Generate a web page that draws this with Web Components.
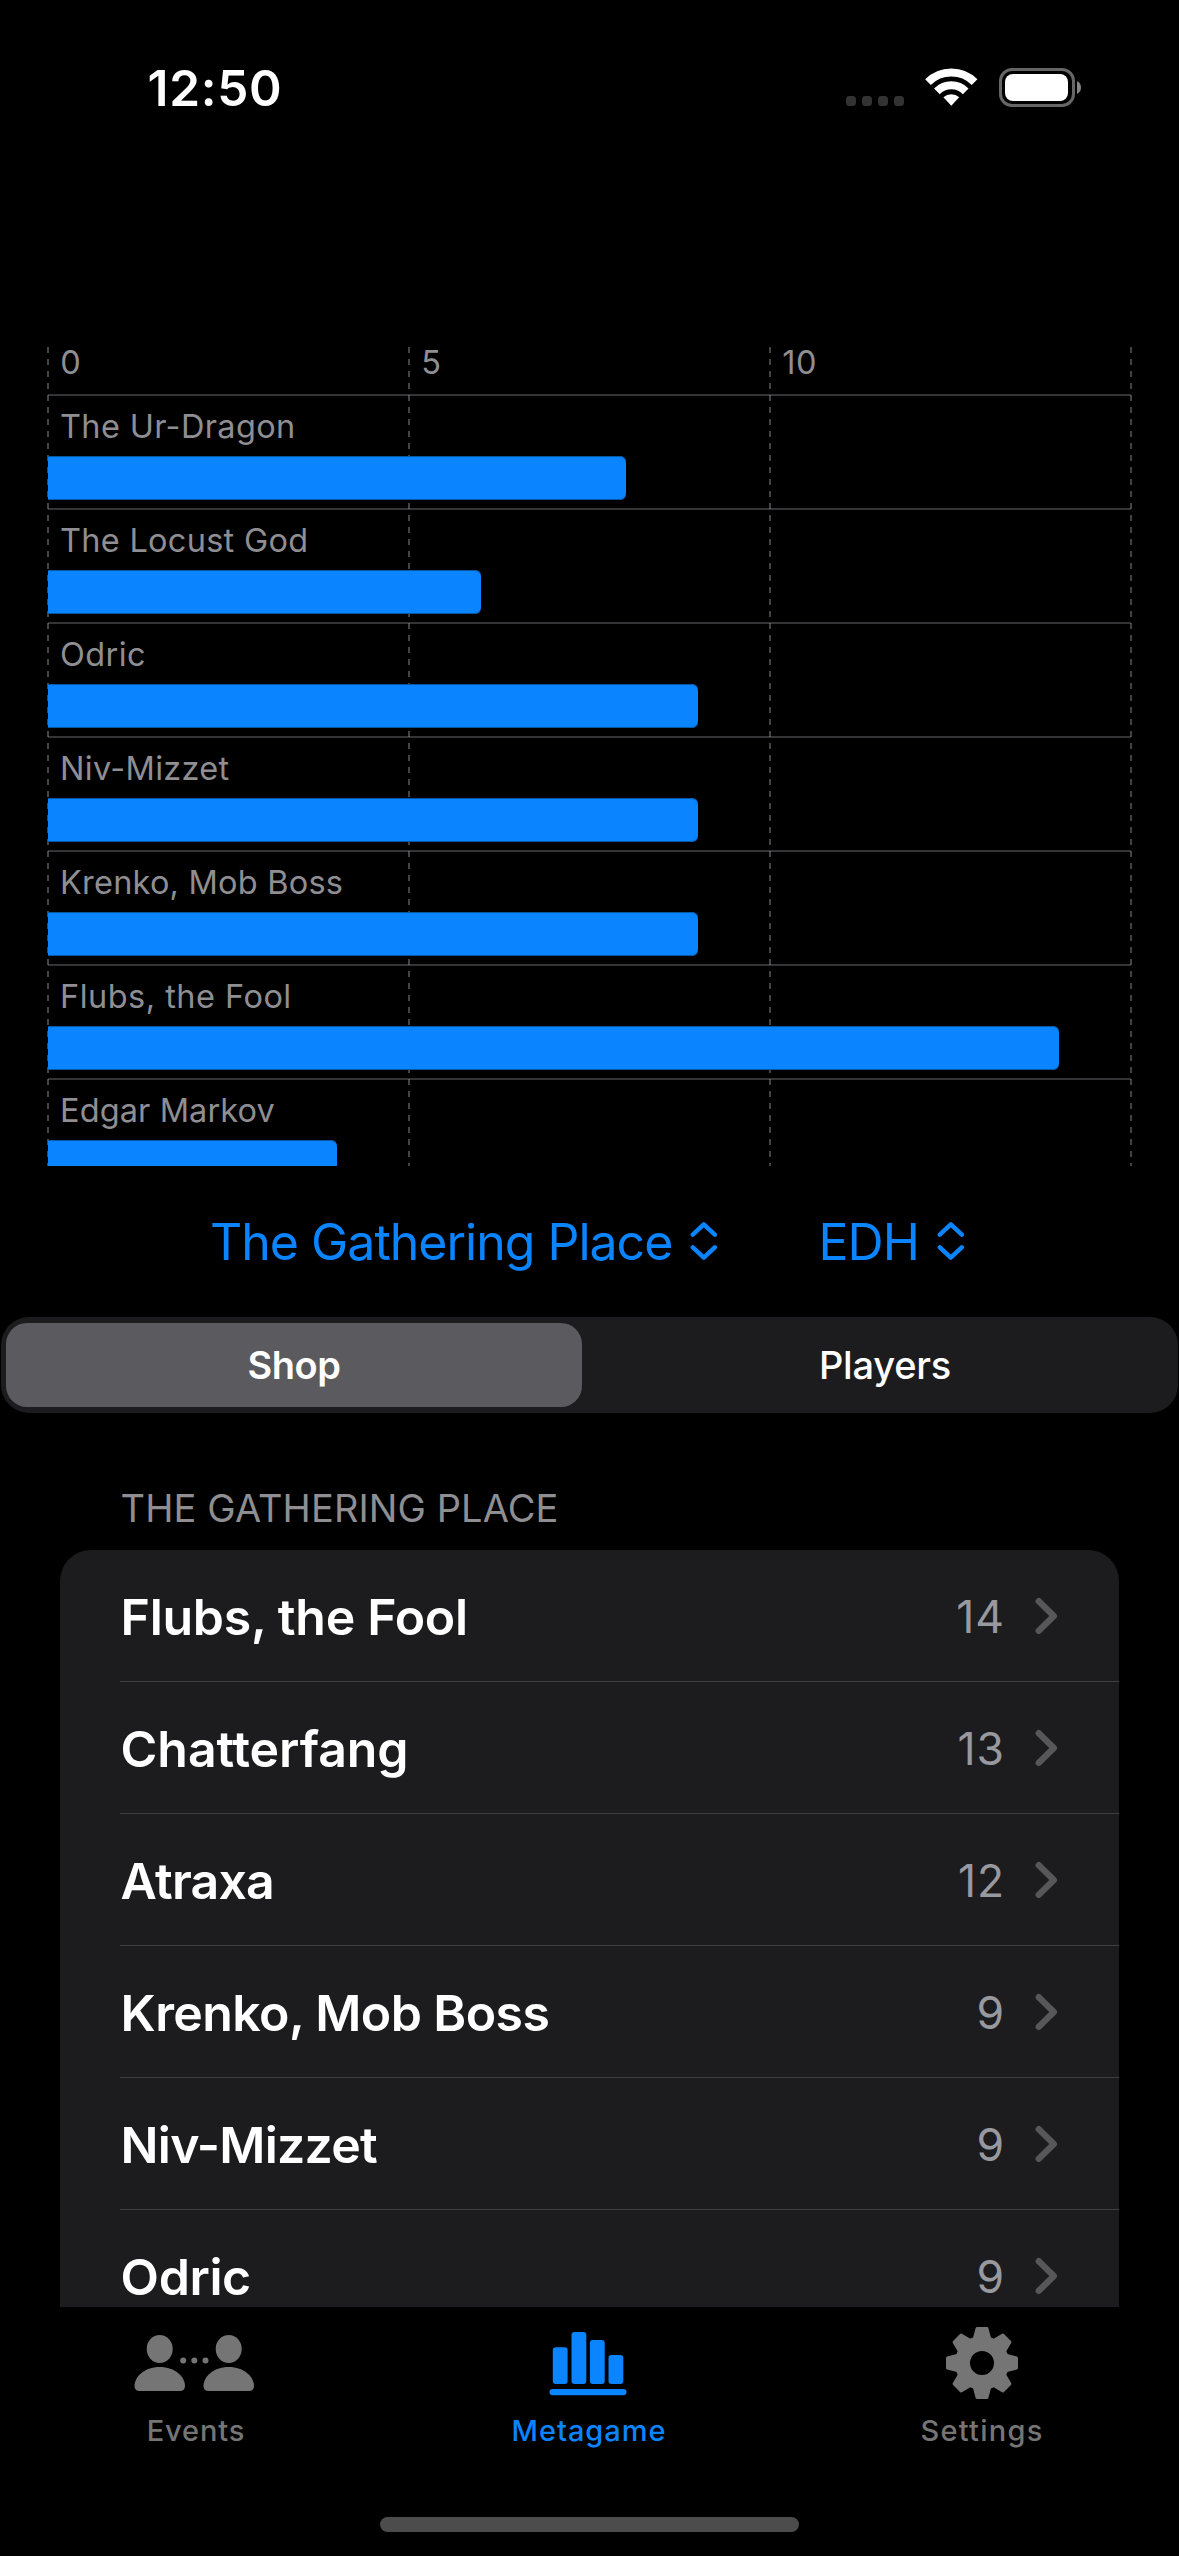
<!DOCTYPE html>
<html lang="en">
<head>
<meta charset="utf-8">
<title>Metagame</title>
<style>
html,body{margin:0;background:#000}
body{width:1179px;height:2556px;overflow:hidden;font-family:Inter,"Liberation Sans",sans-serif;color:#fff}
</style>
</head>
<body>
<meta-app></meta-app>
<script>
const define = (name, render) => customElements.define(name, class extends HTMLElement {
  connectedCallback() {
    if (this.shadowRoot) return;
    this.attachShadow({ mode: 'open' }).innerHTML = render(this);
  }
});
const attr = (el, name) => el.getAttribute(name) || '';

define('status-bar', () => `
<style>
:host{display:flex;align-items:center;justify-content:space-between;height:60px;padding:58px 95px 0 147.5px}
time{font-size:49.5px;font-weight:600;line-height:60px;letter-spacing:.7px}
svg{display:block}
</style>
<time>12:50</time>
<svg width="240" height="44" viewBox="844 66 240 44">
  <g fill="#333"><rect x="846" y="96" width="10" height="10" rx="3.6"/><rect x="862" y="96" width="10" height="10" rx="3.6"/><rect x="878" y="96" width="10" height="10" rx="3.6"/><rect x="894" y="96" width="10" height="10" rx="3.6"/></g>
  <g fill="none" stroke="#fff" stroke-width="8"><path d="M928 82.2A33 33 0 0 1 974.6 82.2"/><path d="M936.9 91.3A20.4 20.4 0 0 1 965.7 91.3"/></g>
  <path d="M951.3 105.7L943.4 97.2A11.8 11.8 0 0 1 959.2 97.2Z" fill="#fff"/>
  <rect x="1000.5" y="69.5" width="73" height="36" rx="11.5" fill="none" stroke="#666" stroke-width="3"/>
  <rect x="1005" y="74" width="63" height="27" rx="8" fill="#fff"/>
  <path d="M1077 81Q1081 83 1081 87.5T1077 94Z" fill="#858585"/>
</svg>`);

define('usage-chart', () => `
<style>
:host{display:block;box-sizing:border-box;width:1085px;height:826px;padding-top:7px;margin:222px 0 0 47px;overflow:hidden;
  --dash:repeating-linear-gradient(to bottom,#444447 0 6px,transparent 6px 12px);
  background:var(--dash) 0 0/2px 100% no-repeat,var(--dash) 361px 0/2px 100% no-repeat,var(--dash) 722px 0/2px 100% no-repeat,var(--dash) 1083px 0/2px 100% no-repeat;
  background-origin:content-box;background-clip:content-box}
header{display:grid;grid-template-columns:repeat(3,361px);height:47px}
header span{padding:1px 0 0 13.2px;font-size:32.5px;line-height:30px;color:#8e8e93}
</style>
<header><span>0</span><span>5</span><span style="letter-spacing:.7px">10</span></header>
<slot></slot>`);

define('chart-row', el => `
<style>
:host{display:block;box-sizing:border-box;height:114px;margin:0 1px;padding-top:11px;border-top:2px solid rgba(142,142,147,.37)}
p{margin:0 0 9px 12px;font-size:32.5px;line-height:40px;color:#8e8e93;letter-spacing:${attr(el, 'ls')}px}
div{height:44px;width:${attr(el, 'value') * 72.2}px;background:#0a84ff;border-radius:0 6px 6px 0;box-shadow:inset 0 1px #0857a5,inset 0 -1px #0857a5}
</style>
<p><slot></slot></p><div></div>`);

define('picker-menu', el => `
<style>
:host{display:flex;align-items:center;color:#0a84ff}
span{width:${attr(el, 'label-width')}px;font-size:50px;line-height:60px;letter-spacing:-1px;white-space:nowrap}
svg{display:block;margin-top:-2px}
</style>
<span><slot></slot></span>
<svg width="28" height="42" viewBox="690 1220 28 42" fill="none" stroke="#0a84ff" stroke-width="4.4" stroke-linecap="round" stroke-linejoin="round"><path d="M692.8 1234.7L703.8 1224.4L714.8 1234.7M692.8 1247.3L703.8 1257.6L714.8 1247.3"/></svg>`);

define('segmented-control', () => `
<style>
:host{display:flex;box-sizing:border-box;gap:15px;height:96px;margin:45px 1px 0;padding:6px 5px;background:#1c1c1e;border-radius:28px}
span{flex:1;display:flex;align-items:center;justify-content:center;font-size:38px;line-height:40px;font-weight:500;border-radius:21px;letter-spacing:-.2px}
.on{background:#5b5a5f;font-weight:600;letter-spacing:-.5px}
</style>
<span class="on">Shop</span><span>Players</span>`);

define('grouped-list', el => `
<style>
:host{display:block;margin:75px 60px 0}
h2{margin:0 0 22px 60.6px;font-size:38px;line-height:40px;font-weight:400;color:#8e8e93;letter-spacing:.1px}
div{height:757px;overflow:hidden;background:#1c1c1e;border-radius:31px 31px 0 0}
</style>
<h2>${attr(el, 'heading')}</h2><div><slot></slot></div>`);

define('list-row', el => `
<style>
:host{display:flex;align-items:center;box-sizing:border-box;height:132px;margin-left:60px;padding-right:59px;border-bottom:1px solid #3d3d41}
b{flex:1;padding:2px 0 0 .6px;font-size:50px;line-height:60px;font-weight:600;letter-spacing:${attr(el, 'ls')}px}
i{font-style:normal;font-size:44.5px;line-height:60px;color:#98989f;letter-spacing:.9px;padding-top:2px}
svg{display:block;margin-left:29px;padding-top:1px}
</style>
<b><slot></slot></b><i>${attr(el, 'count')}</i>
<svg width="26" height="40" viewBox="1034 1596 26 40" fill="none" stroke="#575757" stroke-width="6.4" stroke-linecap="round" stroke-linejoin="round"><path d="M1038.8 1601.2L1053.8 1616L1038.8 1630.8"/></svg>`);

const person = '<ellipse cx="160.2" cy="2349" rx="13" ry="14"/><path d="M140.2 2391Q135 2391 135 2386C135 2377 144.5 2367 160.2 2367S185.5 2377 185.5 2386Q185.5 2391 180.3 2391Z"/>';
const tooth = a => `<path d="M-4.9-34.4H4.9L7.6-24H-7.6Z" transform="rotate(${a})"/>`;
const icons = {
  events: `<svg width="124" height="72" viewBox="135.5 2327 124 72">${person}<g transform="translate(69)">${person}</g><circle cx="183.7" cy="2360.5" r="3"/><circle cx="194.8" cy="2360.5" r="3"/><circle cx="206" cy="2360.5" r="3"/></svg>`,
  metagame: `<svg width="84" height="72" viewBox="548.5 2327 84 72"><rect x="553.3" y="2347.3" width="14.8" height="36.7" rx="3"/><rect x="572" y="2332" width="14.8" height="52" rx="3"/><rect x="590.4" y="2340" width="14.8" height="44" rx="3"/><rect x="609" y="2355" width="14.8" height="29" rx="3"/><rect x="550" y="2389" width="77" height="6.2" rx="3.1"/></svg>`,
  settings: `<svg width="74" height="72" viewBox="-36 -36 74 72"><g stroke="currentColor" stroke-width="3.2" stroke-linejoin="round">${[0,45,90,135,180,225,270,315].map(tooth).join('')}</g><circle r="19.5" fill="none" stroke="currentColor" stroke-width="15"/></svg>`
};
define('tab-item', el => `
<style>
:host{flex:1;display:flex;flex-direction:column;align-items:center;padding-top:20px;color:${el.hasAttribute('selected') ? '#0a84ff' : '#757575'}}
svg{display:block;fill:currentColor;overflow:visible}
span{margin-top:14px;padding-right:1px;font-size:29px;line-height:36px;font-weight:500;letter-spacing:${attr(el, 'ls')}px}
</style>
${icons[attr(el, 'icon')]}<span><slot></slot></span>`);

define('tab-bar', () => `
<style>
:host{display:block}
nav{display:flex;height:210px}
hr{width:419px;height:15px;margin:0 auto;border:0;border-radius:8px;background:#4c4c4c}
</style>
<nav><slot></slot></nav><hr>`);

define('meta-app', () => `
<style>
:host{display:flex;flex-direction:column;height:2556px;background:#000}
.menus{display:flex;gap:100.5px;margin:46px 0 0 210px}
</style>
<status-bar></status-bar>
<usage-chart>
  <chart-row value="8" ls=".36">The Ur-Dragon</chart-row>
  <chart-row value="6" ls=".28">The Locust God</chart-row>
  <chart-row value="9" ls=".4">Odric</chart-row>
  <chart-row value="9" ls=".3">Niv-Mizzet</chart-row>
  <chart-row value="9" ls=".22">Krenko, Mob Boss</chart-row>
  <chart-row value="14" ls=".48">Flubs, the Fool</chart-row>
  <chart-row value="4" ls=".11">Edgar Markov</chart-row>
</usage-chart>
<div class="menus"><picker-menu label-width="480">The Gathering Place</picker-menu><picker-menu label-width="118.5">EDH</picker-menu></div>
<segmented-control></segmented-control>
<grouped-list heading="THE GATHERING PLACE">
  <list-row count="14" ls="-.29">Flubs, the Fool</list-row>
  <list-row count="13" ls="-.08">Chatterfang</list-row>
  <list-row count="12" ls="-.75">Atraxa</list-row>
  <list-row count="9" ls="-.58">Krenko, Mob Boss</list-row>
  <list-row count="9" ls="-.75">Niv-Mizzet</list-row>
  <list-row count="9" ls="-.39">Odric</list-row>
</grouped-list>
<tab-bar>
  <tab-item icon="events" ls=".9">Events</tab-item>
  <tab-item icon="metagame" ls=".97" selected>Metagame</tab-item>
  <tab-item icon="settings" ls="1.25">Settings</tab-item>
</tab-bar>`);
</script>
</body>
</html>
